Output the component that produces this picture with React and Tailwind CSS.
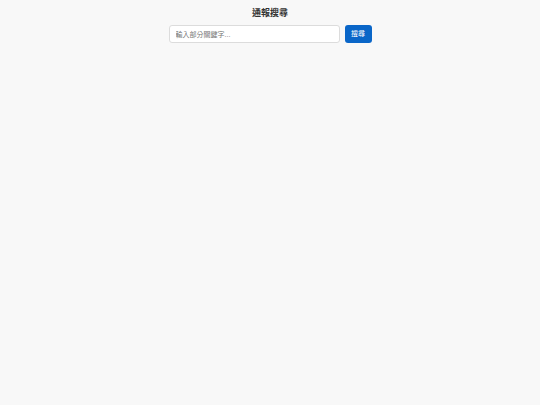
import React, { useState } from 'react'

export default function App() {
  const [q, setQ] = useState('')

  return (
    <div
      className="min-h-screen w-full bg-[#f8f8f8] pt-[7px]"
      style={{ fontFamily: '"Liberation Sans", "Noto Sans CJK TC", sans-serif' }}
    >
      <h1 className="text-center text-[9px] leading-[12px] font-bold text-[#333]">通報搜尋</h1>

      <div className="mt-[6px] flex justify-center gap-[5px]">
        <input
          value={q}
          onChange={e => setQ(e.target.value)}
          placeholder="輸入部分關鍵字..."
          className="h-[18px] w-[171px] rounded-[3px] border border-[#dcdcdc] bg-white px-[6px] text-[7px] text-[#333] outline-none placeholder:text-[#777]"
        />
        <button
          type="button"
          className="h-[18px] w-[27px] rounded-[3px] bg-[#0a66c8] text-[7px] text-white"
        >
          搜尋
        </button>
      </div>
    </div>
  )
}
